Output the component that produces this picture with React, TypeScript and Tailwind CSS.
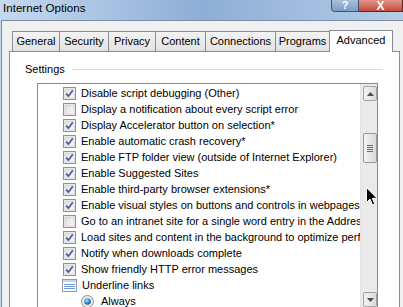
import React from "react";

const tabs = [
  { label: "General", w: "w-[48px]" },
  { label: "Security", w: "w-[50px]" },
  { label: "Privacy", w: "w-[48px]" },
  { label: "Content", w: "w-[51px]" },
  { label: "Connections", w: "w-[71px]" },
  { label: "Programs", w: "w-[55px]" },
];

const items: { label: string; checked: boolean }[] = [
  { label: "Disable script debugging (Other)", checked: true },
  { label: "Display a notification about every script error", checked: false },
  { label: "Display Accelerator button on selection*", checked: true },
  { label: "Enable automatic crash recovery*", checked: true },
  { label: "Enable FTP folder view (outside of Internet Explorer)", checked: true },
  { label: "Enable Suggested Sites", checked: true },
  { label: "Enable third-party browser extensions*", checked: true },
  { label: "Enable visual styles on buttons and controls in webpages", checked: true },
  { label: "Go to an intranet site for a single word entry in the Address bar", checked: false },
  { label: "Load sites and content in the background to optimize performance*", checked: true },
  { label: "Notify when downloads complete", checked: true },
  { label: "Show friendly HTTP error messages", checked: true },
];

const CheckBox = ({ checked }: { checked: boolean }) => (
  <svg width="13" height="13" viewBox="0 0 13 13" className="shrink-0">
    <defs>
      <linearGradient id="cbg" x1="0" y1="0" x2="1" y2="1">
        <stop offset="0" stopColor="#dcdcdc" />
        <stop offset="1" stopColor="#fbfbfb" />
      </linearGradient>
    </defs>
    <rect x="0.5" y="0.5" width="12" height="12" fill="#f4f4f4" stroke="#8e8f8f" />
    <rect x="2" y="2" width="9" height="9" fill="url(#cbg)" stroke="#c6c6c6" strokeWidth="0.6" />
    {checked && (
      <path d="M3.2 6.6 L5.4 9.3 L9.8 3.2" fill="none" stroke="#4a5f97" strokeWidth="1.7" strokeLinejoin="round" />
    )}
  </svg>
);

const GroupIcon = () => (
  <svg width="15" height="13" viewBox="0 0 15 13" className="shrink-0">
    <rect x="0.5" y="0.5" width="14" height="12" fill="#fbfdff" stroke="#8a9bb2" />
    <rect x="1" y="1" width="13" height="2" fill="#c9d6e6" />
    <line x1="2" y1="5.5" x2="13" y2="5.5" stroke="#6b9ad6" />
    <line x1="2" y1="7.5" x2="13" y2="7.5" stroke="#6b9ad6" />
    <line x1="2" y1="9.5" x2="13" y2="9.5" stroke="#6b9ad6" />
  </svg>
);

const Radio = () => (
  <svg width="13" height="13" viewBox="0 0 13 13" className="shrink-0">
    <defs>
      <radialGradient id="rdot" cx="0.4" cy="0.35" r="0.7">
        <stop offset="0" stopColor="#9fe0ff" />
        <stop offset="0.6" stopColor="#2a8ad4" />
        <stop offset="1" stopColor="#0d3d7a" />
      </radialGradient>
    </defs>
    <circle cx="6.5" cy="6.5" r="6" fill="#ececec" stroke="#8e8f8f" />
    <circle cx="6.5" cy="6.5" r="3.3" fill="url(#rdot)" />
  </svg>
);

const ArrowBtn = ({ up }: { up: boolean }) => (
  <div className="h-[15px] w-[14px] ml-[2px] flex items-center justify-center rounded-[2px] border border-[#a3a3a3] bg-gradient-to-r from-[#f2f2f2] to-[#dcdcdc]">
    <svg width="7" height="4" viewBox="0 0 7 4">
      <path d={up ? "M0 4 L3.5 0 L7 4 Z" : "M0 0 L3.5 4 L7 0 Z"} fill="#4d4d4d" />
    </svg>
  </div>
);

export default function App() {
  return (
    <div className="relative w-[403px] h-[307px] overflow-hidden flex flex-col bg-[#c4d7ee] font-['Liberation_Sans',sans-serif] text-black">
      {/* title bar */}
      <div className="h-[20px] shrink-0 flex items-start bg-gradient-to-r from-[#c6d9ef] via-[#8eaed6] to-[#b5cbe6]">
        <span className="pl-[3px] pt-[1px] text-[11.6px] leading-[14px] text-black">Internet Options</span>
        <div className="ml-auto flex">
          <div className="w-[28px] h-[12px] flex items-center justify-center rounded-bl-[4px] border border-t-0 border-[#3b5778] bg-gradient-to-b from-[#a9c0dc] to-[#7c9cc5] text-white text-[11px] font-bold leading-none">?</div>
          <div className="w-[44px] h-[12px] flex items-center justify-center border border-t-0 border-l-0 border-[#5e2820] bg-gradient-to-b from-[#e0938a] to-[#c44a3a] text-white text-[12px] font-bold leading-none">X</div>
        </div>
      </div>

      {/* client */}
      <div className="flex-1 ml-[1px] border-l border-t border-[#7c8ea6] bg-[#f0f0f0] flex flex-col">
        <div className="flex items-end h-[30px] pl-[10px]">
          {tabs.map((t) => (
            <div
              key={t.label}
              className={`${t.w} h-[20px] -mr-px flex items-center justify-center border border-b-0 border-[#898c95] bg-gradient-to-b from-[#f3f3f3] to-[#e2e2e2] text-[11px] leading-none`}
            >
              {t.label}
            </div>
          ))}
          <div className="w-[64px] h-[22px] -mb-px z-10 flex items-start justify-center pt-[4px] border border-b-0 border-[#898c95] bg-white text-[11px] leading-none">
            Advanced
          </div>
        </div>

        <div className="flex-1 ml-[7px] mr-[3px] border border-[#898c95] bg-white flex flex-col">
          <div className="flex items-center mt-[10px] pl-[15px] pr-[16px] h-[14px]">
            <span className="text-[11px] leading-none">Settings</span>
            <div className="flex-1 ml-[7px] h-px bg-[#d5dfe5]" />
          </div>

          <div className="ml-[27px] mt-[7px] w-[341px] flex-1 border border-[#828790] flex">
            <div className="flex-1 overflow-hidden pt-[1px]">
              {items.map((it) => (
                <div key={it.label} className="h-[16px] flex items-center pl-[25px] whitespace-nowrap">
                  <CheckBox checked={it.checked} />
                  <span className="ml-[5px] text-[11px] leading-none">{it.label}</span>
                </div>
              ))}
              <div className="h-[16px] flex items-center pl-[24px] whitespace-nowrap">
                <GroupIcon />
                <span className="ml-[5px] text-[11px] leading-none">Underline links</span>
              </div>
              <div className="h-[16px] flex items-center pl-[43px] whitespace-nowrap">
                <Radio />
                <span className="ml-[7px] text-[11px] leading-none">Always</span>
              </div>
            </div>
            <div className="w-[17px] shrink-0 bg-[#eaeaea] border-l border-[#e4e4e4] flex flex-col pt-[2px] pb-[2px]">
              <ArrowBtn up />
              <div className="h-[32px]" />
              <div className="h-[30px] w-[14px] ml-[2px] flex flex-col items-center justify-center gap-[1px] rounded-[2px] border border-[#9a9a9a] bg-gradient-to-r from-[#f4f4f4] to-[#d9d9d9]">
                <div className="w-[6px] h-px bg-[#6d6d6d]" />
                <div className="w-[6px] h-px bg-[#6d6d6d]" />
                <div className="w-[6px] h-px bg-[#6d6d6d]" />
                <div className="w-[6px] h-px bg-[#6d6d6d]" />
              </div>
              <div className="flex-1" />
              <ArrowBtn up={false} />
            </div>
          </div>
        </div>
      </div>

      {/* mouse pointer */}
      <svg className="absolute left-[366px] top-[187px]" width="12" height="19" viewBox="0 0 12 19">
        <path d="M0.5 0.5 L0.5 15.5 L4 12 L6.5 18 L8.8 17 L6.3 11.3 L11 11.3 Z" fill="#000" stroke="#fff" strokeWidth="1" />
      </svg>
    </div>
  );
}
